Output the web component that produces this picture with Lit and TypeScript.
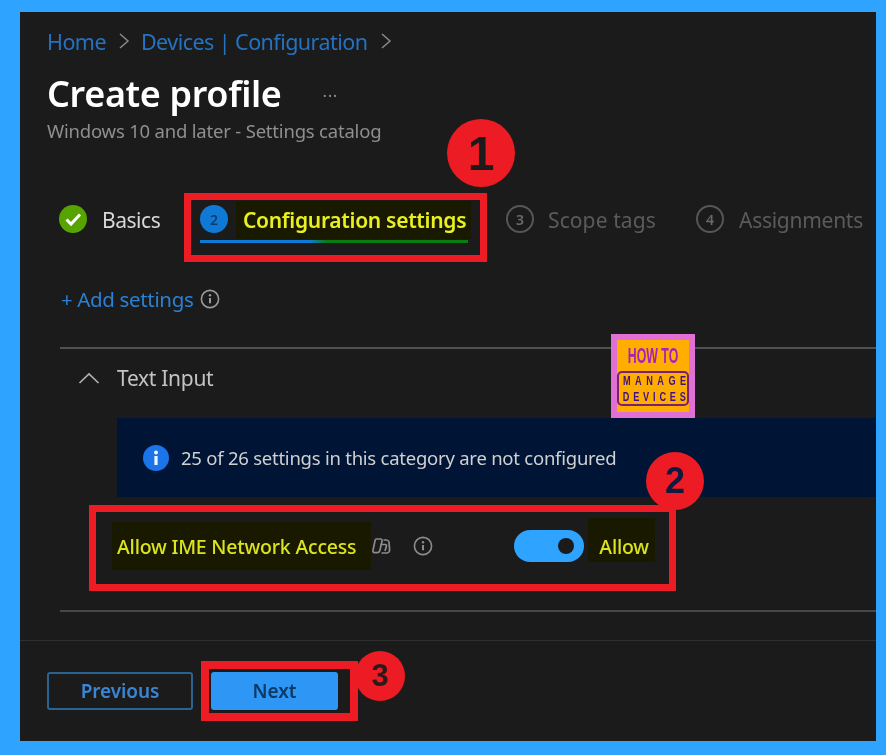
import { LitElement, html, css } from "lit";
import { customElement } from "lit/decorators.js";

const infoIcon = (size: number, color: string) => html`<svg width=${size} height=${size} viewBox="0 0 20 20" fill="none" stroke=${color} stroke-width="1.6"><circle cx="10" cy="10" r="8.6"/><path d="M10 9v5.2" stroke-width="2"/><circle cx="10" cy="6.3" r="1.2" fill=${color} stroke="none"/></svg>`;

@customElement("app-root")
export class AppRoot extends LitElement {
  static styles = css`
    :host { display: block; width: 886px; height: 755px; box-sizing: border-box; padding: 12px 10px 14px 20px; background: #2ea3ff; font-family: "Noto Sans", "Open Sans", sans-serif; overflow: hidden; }
    .panel { position: relative; height: 729px; background: #1b1b1b; display: flex; flex-direction: column; overflow: hidden; filter: blur(0.45px); }
    .layer { position: absolute; left: -20px; top: -12px; width: 886px; height: 755px; pointer-events: none; }
    .crumbs { display: flex; align-items: center; height: 30px; margin: 14px 0 0 27px; font-size: 21.5px; letter-spacing: -0.55px; color: #2472c0; }
    .crumbs svg { margin: 0 11px 0 12px; }
    .crumbs svg:last-child { margin-left: 13px; }
    .title-row { display: flex; align-items: center; height: 50px; margin: 12px 0 0 27px; }
    h1 { margin: 0; font-size: 36px; font-weight: 600; letter-spacing: -0.35px; color: #fff; }
    .dots { margin: -5px 0 0 41px; color: #8c8c8c; font-size: 17px; letter-spacing: 0.5px; }
    .sub { height: 24px; line-height: 24px; margin: 1px 0 0 27px; font-size: 18.5px; letter-spacing: -0.2px; color: #8f8f8f; }
    .tabs { display: flex; align-items: center; height: 40px; margin: 56px 0 0 39px; font-size: 21px; }
    .tab { display: flex; align-items: center; gap: 14px; flex: none; }
    .tab .text { margin-top: 2px; }
    .basics { width: 141px; color: #d8d8d8; letter-spacing: -0.47px; gap: 15px; }
    .config { position: relative; width: 306px; gap: 15px; }
    .config::before { content: ""; position: absolute; left: 36px; top: -3px; width: 235px; height: 38px; background: #191900; }
    .config .num, .config .text { position: relative; }
    .config .text { color: #e8f020; font-weight: 600; letter-spacing: -0.3px; }
    .bar { position: absolute; left: 0; top: 36px; width: 268px; height: 3px; background: linear-gradient(90deg, #0f7ad5 0 41%, #0a7d12 47% 100%); }
    .scope { width: 190px; color: #5b5b5b; letter-spacing: 0.1px; }
    .assign { color: #5b5b5b; letter-spacing: -0.27px; gap: 15px; }
    .num { width: 28px; height: 28px; box-sizing: border-box; border-radius: 50%; display: flex; align-items: center; justify-content: center; font-size: 14px; font-weight: 600; flex: none; letter-spacing: 0; }
    .num.on { background: #0f7ad5; color: #0b3c6c; }
    .num.off { border: 2px solid #565656; color: #6a6a6a; }
    .add { display: flex; align-items: center; gap: 7px; height: 30px; margin: 45px 0 0 41px; font-size: 20.5px; letter-spacing: -0.35px; color: #2a80d6; }
    .rule { height: 2px; margin: 33px 0 0 40px; background: #505050; flex: none; }
    .section { display: flex; align-items: center; gap: 17px; height: 58px; padding-left: 58px; font-size: 21px; letter-spacing: -0.3px; color: #c4c4c4; }
    .banner { display: flex; align-items: center; gap: 12px; height: 79px; margin: 11px 0 0 97px; padding-left: 26px; background: #001535; font-size: 18.5px; letter-spacing: -0.24px; color: #d0d0d0; flex: none; }
    .setting { display: flex; align-items: center; height: 98px; padding: 0 0 0 92px; flex: none; }
    .hl { display: flex; align-items: center; height: 48px; padding: 0 15px 0 5px; background: #191900; color: #dbe41c; font-size: 19.5px; font-weight: 500; letter-spacing: -0.2px; }
    .copilot { margin-right: 22px; }
    .info { margin-right: 81px; display: flex; }
    .toggle { width: 70px; height: 32px; border-radius: 16px; background: #2ea3ff; box-sizing: border-box; padding-right: 10px; display: flex; align-items: center; justify-content: flex-end; }
    .knob { width: 16px; height: 16px; border-radius: 50%; background: #1b1b1b; }
    .allow { display: flex; align-items: center; box-sizing: border-box; height: 44px; margin: -12px 0 0 4px; padding: 12px 6px 0 11px; background: #191900; color: #dbe41c; font-size: 19.5px; font-weight: 500; letter-spacing: -0.2px; }
    .rule2 { height: 2px; margin: 15px 0 0 40px; background: #474747; flex: none; }
    .rule3 { height: 1px; margin-top: 28px; background: #2f2f2f; flex: none; }
    .foot { display: flex; gap: 18px; margin: 31px 0 0 27px; }
    .btn { box-sizing: border-box; height: 38px; border-radius: 3px; display: flex; align-items: center; justify-content: center; font-size: 19px; font-weight: 600; letter-spacing: -0.1px; }
    .prev { width: 146px; border: 2px solid #2a638f; color: #3a86d4; }
    .next { width: 127px; background: #2e96f5; color: #0c3a66; }
    .box { position: absolute; box-sizing: border-box; border: 7px solid #ed1c24; }
    .b1 { left: 184px; top: 193px; width: 303px; height: 69px; }
    .b2 { left: 89px; top: 505px; width: 587px; height: 86px; }
    .b3 { left: 201px; top: 661px; width: 157px; height: 60px; border-width: 8px; }
    .mark { position: absolute; border-radius: 50%; background: #ed1c24; display: flex; align-items: center; justify-content: center; font-family: "Liberation Sans", sans-serif; font-weight: 700; }
    .m1 { left: 447px; top: 119px; width: 68px; height: 68px; font-size: 48px; color: #1b1b1b; }
    .m2 { left: 646px; top: 452px; width: 58px; height: 58px; font-size: 36px; color: #101a40; }
    .m3 { left: 355px; top: 651px; width: 50px; height: 50px; font-size: 31px; color: #2a1a1a; }
    .logo { position: absolute; left: 611px; top: 334px; width: 84px; height: 84px; box-sizing: border-box; border: 6px solid #e070d4; background: #ffae00; display: flex; flex-direction: column; align-items: center; color: #a820b8; }
    .how { font-family: "Liberation Sans", sans-serif; font-weight: 700; font-size: 22px; line-height: 22px; margin-top: 5px; transform: scaleX(0.56); white-space: nowrap; }
    .manage { margin-top: 4px; width: 72px; height: 35px; box-sizing: border-box; border: 2px solid #7a2070; border-radius: 5px; color: #3d0f8a; font-family: "Liberation Sans", sans-serif; font-weight: 700; font-size: 13.5px; line-height: 15.5px; display: flex; flex-direction: column; align-items: center; justify-content: center; }
    .manage span { display: block; white-space: nowrap; transform: scaleX(0.68); }
    .l1 { letter-spacing: 6.6px; margin-right: -6.6px; }
    .l2 { letter-spacing: 5.6px; margin-right: -5.6px; }
  `;

  private chev() {
    return html`<svg width="12" height="20" viewBox="0 0 12 20" fill="none" stroke="#8a8a8a" stroke-width="1.5"><path d="M2 3l8 7-8 7"/></svg>`;
  }

  render() {
    return html`<div class="panel">
      <div class="crumbs">Home${this.chev()}Devices | Configuration${this.chev()}</div>
      <div class="title-row"><h1>Create profile</h1><span class="dots">...</span></div>
      <div class="sub">Windows 10 and later - Settings catalog</div>
      <div class="tabs">
        <div class="tab basics">
          <svg width="28" height="28" viewBox="0 0 28 28"><circle cx="14" cy="14" r="14" fill="#57a300"/><path d="M7.500 14.500l4.500 4.500 9-9.500" fill="none" stroke="#fff" stroke-width="3"/></svg>
          <span class="text">Basics</span>
        </div>
        <div class="tab config"><span class="num on">2</span><span class="text">Configuration settings</span><span class="bar"></span></div>
        <div class="tab scope"><span class="num off">3</span><span class="text">Scope tags</span></div>
        <div class="tab assign"><span class="num off">4</span><span class="text">Assignments</span></div>
      </div>
      <div class="add"><span>+ Add settings</span>${infoIcon(20, "#9a9a9a")}</div>
      <div class="rule"></div>
      <div class="section">
        <svg width="22" height="14" viewBox="0 0 22 14" fill="none" stroke="#b0b0b0" stroke-width="1.7"><path d="M1.500 12L11 3l9.500 9"/></svg>
        <span>Text Input</span>
      </div>
      <div class="banner">
        <svg width="26" height="26" viewBox="0 0 26 26"><circle cx="13" cy="13" r="13" fill="#1b74e8"/><rect x="11.400" y="11" width="3.200" height="9" fill="#f2f6ff"/><circle cx="13" cy="7.500" r="2" fill="#f2f6ff"/></svg>
        <span>25 of 26 settings in this category are not configured</span>
      </div>
      <div class="setting">
        <div class="hl">Allow IME Network Access</div>
        <svg class="copilot" width="20" height="20" viewBox="0 0 20 20" fill="none" stroke="#8c8c8c" stroke-width="1.700"><path d="M5.500 3h4c1.200 0 1.800 1 1.500 2.200L8.800 14.800C8.500 16 7.700 16.600 6.500 16.600H3.500C2.300 16.600 1.700 15.600 2 14.400L4 4.800C4.200 3.700 4.600 3 5.500 3z"/><path d="M12.500 4H15.500C16.800 4 17.600 4.800 18 6L18.600 13.500C18.800 15.200 17.800 17 16 17H10.500"/><path d="M9.500 8.500H14.500C15.500 8.500 15.700 9.300 15.400 10.300L14 15"/></svg>
        <span class="info">${infoIcon(20, "#8c8c8c")}</span>
        <div class="toggle"><span class="knob"></span></div>
        <div class="allow">Allow</div>
      </div>
      <div class="rule2"></div>
      <div class="rule3"></div>
      <div class="foot"><div class="btn prev">Previous</div><div class="btn next">Next</div></div>

      <div class="layer">
        <div class="logo"><div class="how">HOW TO</div><div class="manage"><span class="l1">MANAGE</span><span class="l2">DEVICES</span></div></div>
        <div class="box b1"></div><div class="box b2"></div><div class="box b3"></div>
        <div class="mark m1">1</div><div class="mark m2">2</div><div class="mark m3">3</div>
      </div>
    </div>`;
  }
}
